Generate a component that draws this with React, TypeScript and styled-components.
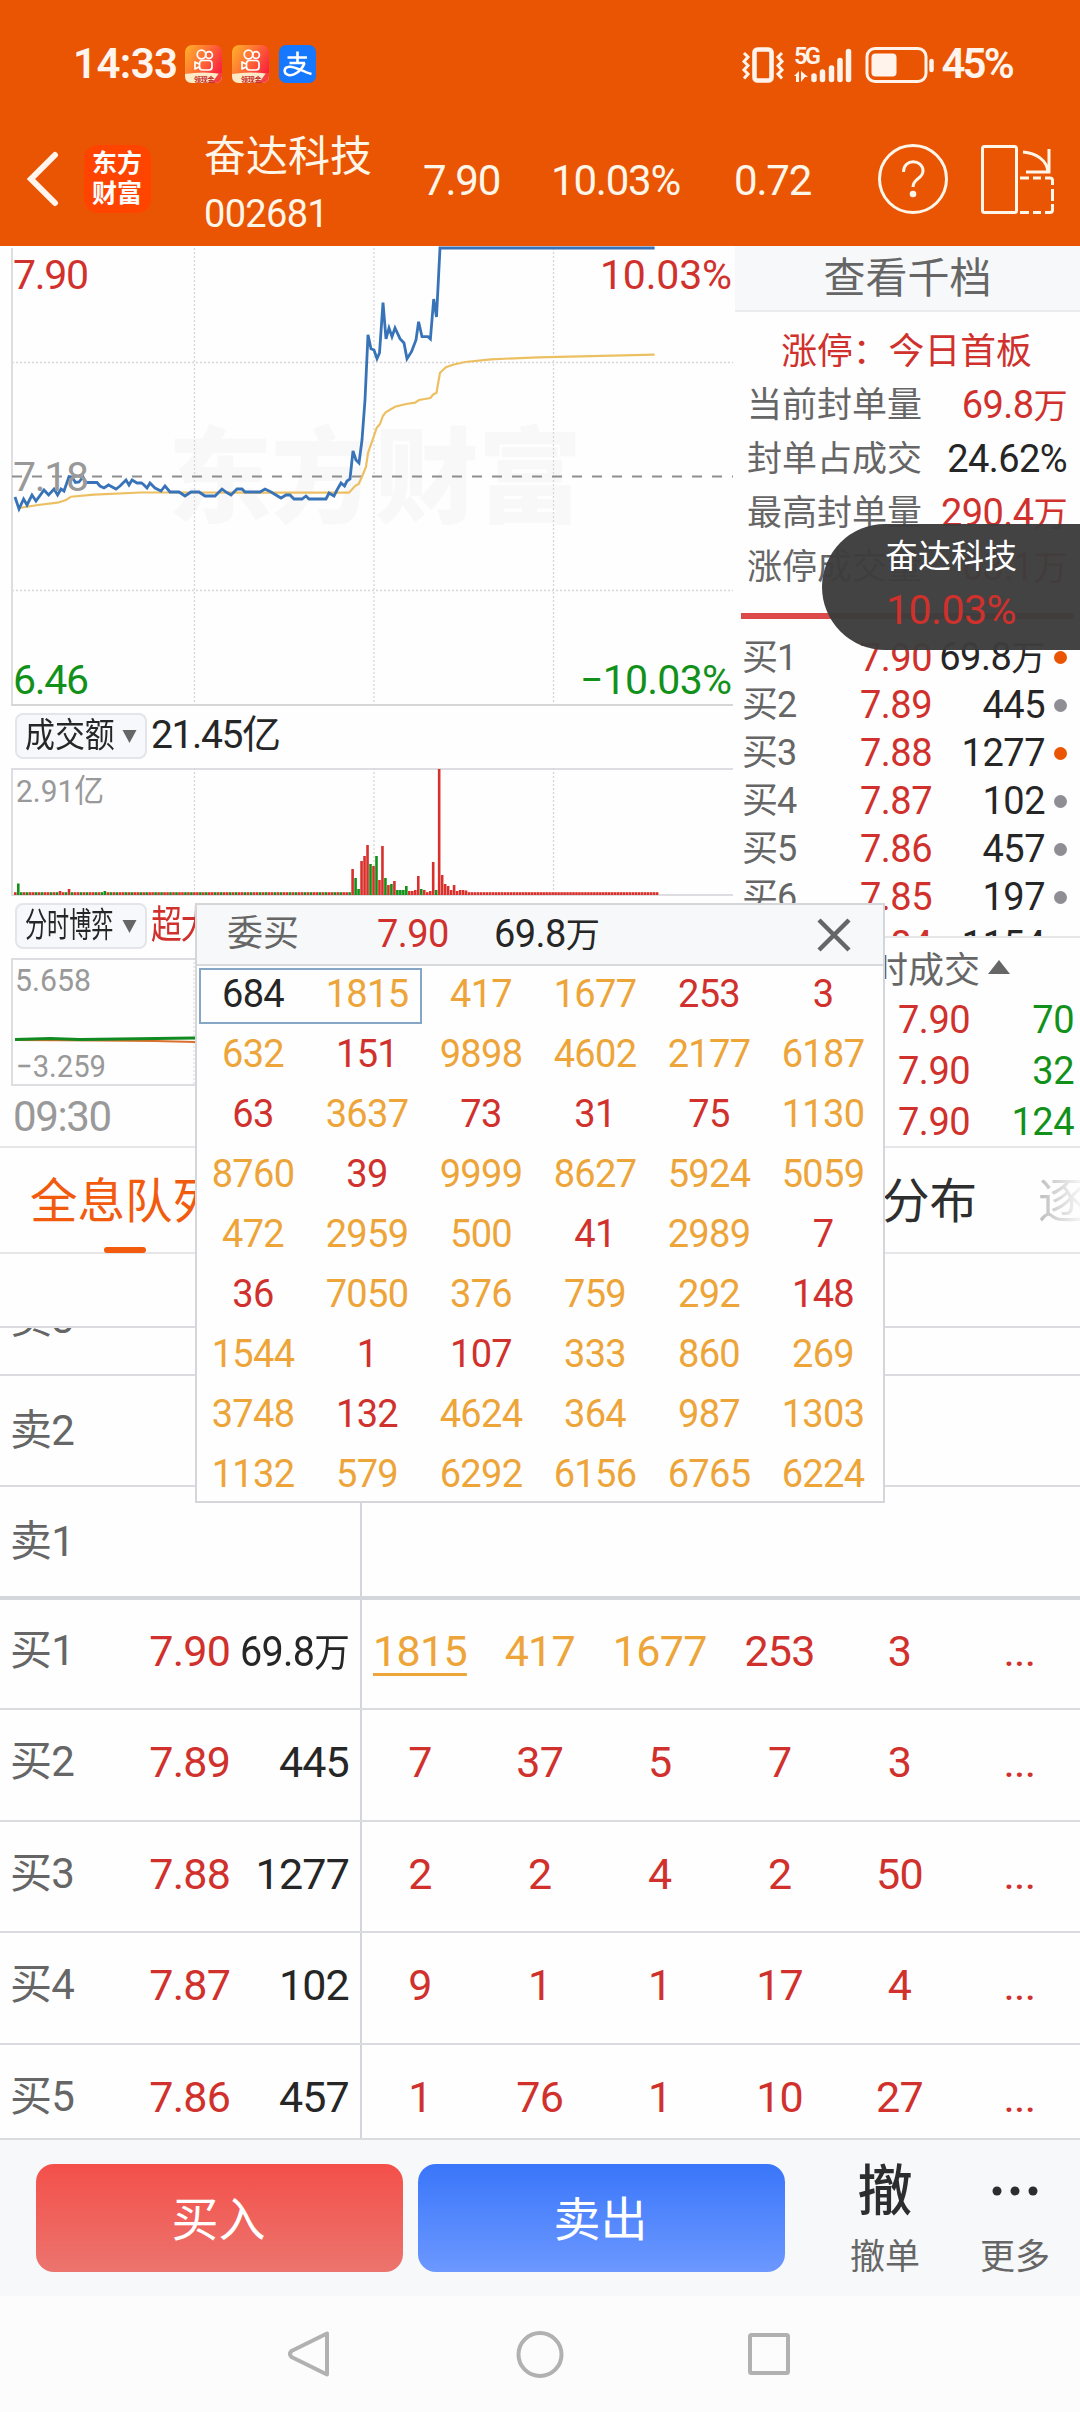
import { FC } from "react";
import styled, { createGlobalStyle, css } from "styled-components";

const RED = "#d0312d";
const GREEN = "#12911a";
const GOLD = "#eda53a";
const ORANGE = "#e95502";
const GREY = "#666666";
const DARK = "#262626";

type Level = { label: string; price: string; volume: string; hot?: boolean };
type QueueRow = Level & { orders: string[]; underlined?: boolean };

const limitInfo = [
  { label: "当前封单量", value: "69.8万", color: RED },
  { label: "封单占成交", value: "24.62%", color: DARK },
  { label: "最高封单量", value: "290.4万", color: RED },
  { label: "涨停成交量", value: "63.1万", color: RED },
];

const levels: Level[] = [
  { label: "买1", price: "7.90", volume: "69.8万", hot: true },
  { label: "买2", price: "7.89", volume: "445" },
  { label: "买3", price: "7.88", volume: "1277", hot: true },
  { label: "买4", price: "7.87", volume: "102" },
  { label: "买5", price: "7.86", volume: "457" },
  { label: "买6", price: "7.85", volume: "197" },
  { label: "买7", price: "7.84", volume: "1154", hot: true },
];

const trades = [
  { price: "7.90", volume: "70" },
  { price: "7.90", volume: "32" },
  { price: "7.90", volume: "124" },
];

const queue: QueueRow[] = [
  {
    label: "买1",
    price: "7.90",
    volume: "69.8万",
    orders: ["1815", "417", "1677", "253", "3", "..."],
    underlined: true,
  },
  { label: "买2", price: "7.89", volume: "445", orders: ["7", "37", "5", "7", "3", "..."] },
  { label: "买3", price: "7.88", volume: "1277", orders: ["2", "2", "4", "2", "50", "..."] },
  { label: "买4", price: "7.87", volume: "102", orders: ["9", "1", "1", "17", "4", "..."] },
  { label: "买5", price: "7.86", volume: "457", orders: ["1", "76", "1", "10", "27", "..."] },
];

const popupOrders = [
  684, 1815, 417, 1677, 253, 3, 632, 151, 9898, 4602, 2177, 6187, 63, 3637, 73, 31, 75, 1130, 8760,
  39, 9999, 8627, 5924, 5059, 472, 2959, 500, 41, 2989, 7, 36, 7050, 376, 759, 292, 148, 1544, 1,
  107, 333, 860, 269, 3748, 132, 4624, 364, 987, 1303, 1132, 579, 6292, 6156, 6765, 6224,
];

const orderColor = (value: number) => (value > 253 ? GOLD : RED);

const priceLine =
  "15,251 19,263 23.6,253 27,259 32,249 36,255 44,244 48.6,249 54,243 57.6,249 61,243 64,245 69,230.5 72,231 75.5,236.5 79,236 83,231 86,236.5 97,236.5 100,240 104,242 108.5,239 116,243 120,240 126,234 129,239 132,234 137,237 141.5,237 144,239 147,242 150,237 155,242 161,245 165,240 170,246 179,246 185,250 191,246 199,246 205,250 215,250 222,243 226,246 231,249 237,243 242,243 245,246 252,246 260,246 265,243 271,246 281,252 286,249 290,249 294,253 302,253 306,250 309,253 326,253 329,247 334,250 337,244 341,237 344.5,240 347,235 350,233 353,205 356,214 359,217 362,194 365,154 368,88.7 371,102.7 374,104 377,112.7 379.5,107 383,56.7 386,93 389,82 392,90.7 395,82 400,92.7 404,97 407,112.7 411.5,105.7 416,94 418.6,75.7 422,90.7 428,90.7 430.4,93 433.7,53 436.5,71 440,2 654.6,2";

const averageLine =
  "19,262 38,259 57.6,256.7 66,254 71,250.7 94,248.7 141,246.5 189,246.5 349,246.7 355,240 358.6,238 362,230.7 366,220.7 368,207 372,195.7 376.6,182 380,178 383,169.7 386,166 395,160.7 406,158 415,156.7 419,154 430.4,152 433,148.7 436.5,146.7 440,126.7 446,121.3 453,118.7 465,116 491,113.3 538,111.3 654.6,108.7";

// [minute index, height, rising]
const tallBars: [number, number, boolean][] = [
  [1, 11.5, false],
  [15, 4, true],
  [18, 6, true],
  [30, 4, false],
  [113, 26, true],
  [114, 17, false],
  [115, 6, false],
  [116, 34, true],
  [117, 39, true],
  [118, 50, true],
  [119, 31, false],
  [120, 29, true],
  [121, 39, false],
  [122, 15, true],
  [123, 49, true],
  [124, 17, false],
  [125, 10, true],
  [126, 11, false],
  [127, 14, true],
  [128, 5, false],
  [129, 5, false],
  [130, 5, false],
  [131, 9, false],
  [132, 4, true],
  [133, 4, true],
  [134, 5, true],
  [135, 19, true],
  [136, 6, false],
  [137, 5, true],
  [139, 4, true],
  [140, 33, true],
  [141, 5, false],
  [142, 126, true],
  [143, 20, true],
  [144, 11, true],
  [145, 9, true],
  [146, 5, true],
  [147, 10, true],
  [148, 4, true],
  [149, 5, true],
  [150, 5, true],
  [151, 4.5, true],
];

const bars = Array.from({ length: 216 }, (_, i) => {
  const tall = tallBars.find(([minute]) => minute === i);
  if (tall) return { height: tall[1], up: tall[2] };
  return { height: 2.8, up: i > 141 || (i * 7) % 5 < 3 };
});

const GlobalStyle = createGlobalStyle`
  * {
    box-sizing: border-box;
  }
  body {
    margin: 0;
    background: #fefefe;
    font-family: Roboto, "Noto Sans CJK SC", sans-serif;
  }
  button {
    border: 0;
    padding: 0;
    background: none;
    font: inherit;
    color: inherit;
  }
  svg {
    display: block;
    flex: none;
  }
`;

const Screen = styled.div`
  position: relative;
  width: 1080px;
  height: 2412px;
  overflow: hidden;
  background: #fefefe;
  white-space: nowrap;
`;

const StatusBar = styled.div`
  display: flex;
  align-items: center;
  height: 127px;
  padding: 0 68px 0 73px;
  background: ${ORANGE};
  color: #fff5ee;
  font-size: 42px;
  font-weight: 600;
  letter-spacing: -0.6px;
`;

const AppIcons = styled.div`
  display: flex;
  gap: 10px;
  margin-left: 8px;
`;

const StatusRight = styled.div`
  display: flex;
  align-items: center;
  gap: 4px;
  margin-left: auto;
  letter-spacing: -2.8px;
`;

const Header = styled.header`
  display: flex;
  align-items: center;
  height: 119px;
  padding: 0 25px 16px 26px;
  background: ${ORANGE};
  color: #fff6ea;
  font-size: 42px;
`;

const Brand = styled.div`
  display: flex;
  flex-direction: column;
  align-items: center;
  justify-content: center;
  width: 67px;
  height: 68px;
  margin-left: 25px;
  padding-right: 1px;
  border-radius: 14px;
  background: #ff4400;
  color: #fff;
  font-size: 25px;
  font-weight: 700;
  line-height: 30px;
`;

const StockName = styled.div`
  display: flex;
  flex-direction: column;
  width: 219px;
  margin-left: 53px;
  padding-top: 13px;
  line-height: 58px;

  small {
    font-size: 38px;
    line-height: 57px;
    letter-spacing: -0.7px;
  }
`;

const HeaderStat = styled.span<{ $width: number }>`
  width: ${({ $width }) => $width}px;
  padding-top: 3px;
  letter-spacing: -1.2px;
`;

const Spacer = styled.div`
  flex: 1;
`;

const Overview = styled.div`
  display: flex;
  height: 902px;
  border-bottom: 2px solid #e6e6e8;
`;

const Charts = styled.div`
  display: flex;
  flex-direction: column;
  width: 735px;
`;

const IndicatorBar = styled.div<{ $color?: string }>`
  display: flex;
  align-items: center;
  gap: 4px;
  height: 46px;
  margin: 7px 0 9px 15px;
  color: ${({ $color }) => $color ?? DARK};
  font-size: 39px;
  line-height: 42px;
  letter-spacing: -1.4px;
`;

const IndicatorSelect = styled.button`
  display: flex;
  align-items: center;
  justify-content: space-between;
  width: 132px;
  height: 46px;
  padding: 0 8px 0 8px;
  border: 2px solid #e3e5ea;
  border-radius: 8px;
  background: #f6f8fb;
  color: ${DARK};
  font-size: 34px;
  line-height: 40px;
  letter-spacing: 0;
`;

const Squeezed = styled.span<{ $width: number; $ratio: number }>`
  width: ${({ $width }) => $width}px;
  margin-top: -2px;

  span {
    display: inline-block;
    transform: scaleX(${({ $ratio }) => $ratio});
    transform-origin: left center;
  }
`;

const TimeAxis = styled.div`
  padding-left: 13px;
  color: #999;
  font-size: 42px;
  line-height: 61px;
  letter-spacing: -1.4px;
`;

const Side = styled.aside`
  display: flex;
  flex-direction: column;
  width: 345px;

  > * {
    flex: none;
  }
`;

const DepthLink = styled.button`
  height: 66px;
  border-bottom: 2px solid #ececef;
  background: #f7f8fa;
  color: ${GREY};
  font-size: 42px;
  line-height: 63px;
`;

const LimitTitle = styled.div`
  margin-top: 14px;
  padding-right: 2px;
  color: ${RED};
  font-size: 35.8px;
  line-height: 52px;
  text-align: center;
`;

const LimitRow = styled.div`
  display: flex;
  justify-content: space-between;
  height: 54px;
  padding: 0 13px 0 12px;
  color: ${GREY};
  font-size: 35px;
  line-height: 55px;
`;

const Figure = styled.span<{ $color: string }>`
  color: ${({ $color }) => $color};
  font-size: 38px;
  letter-spacing: -0.6px;
`;

const Unit = styled.small`
  font-size: 0.9em;
`;

const PressureBar = styled.div`
  height: 6px;
  margin: 19px 6px 14px;
  background: #dd4a4a;
`;

const LevelList = styled.div`
  height: 305px;
  overflow: hidden;
  border-bottom: 2px solid #e6e6e8;
`;

const LevelRow = styled.div`
  display: grid;
  grid-template-columns: 70px 120px 113px auto;
  align-items: center;
  height: 48px;
  padding-left: 7px;
  color: ${DARK};
  font-size: 38px;
  line-height: 48px;
  text-align: right;
  letter-spacing: -0.5px;

  span:first-child {
    color: ${GREY};
    font-size: 36px;
    text-align: left;
    letter-spacing: -1px;
  }
  span:nth-child(2) {
    color: ${RED};
  }
`;

const Dot = styled.i<{ $hot?: boolean }>`
  width: 13px;
  height: 13px;
  margin-left: 9px;
  border-radius: 50%;
  background: ${({ $hot }) => ($hot ? ORANGE : "#8e8e94")};
`;

const TradesTitle = styled.div`
  display: flex;
  align-items: center;
  gap: 8px;
  height: 57px;
  padding-left: 101px;
  color: ${GREY};
  font-size: 36px;
`;

const TradeRow = styled.div`
  display: flex;
  justify-content: space-between;
  padding: 0 6px 0 163px;
  color: ${RED};
  font-size: 38px;
  line-height: 51px;
  letter-spacing: -0.5px;

  span:last-child {
    color: ${GREEN};
  }
`;

const Tabs = styled.nav`
  display: flex;
  height: 106px;
  padding-left: 30px;
  border-bottom: 2px solid #e6e6e8;
`;

const Tab = styled.button<{ $active?: boolean; $fading?: boolean }>`
  display: flex;
  flex-direction: column;
  align-items: center;
  height: 105px;
  margin-left: auto;
  color: #2e2e2e;
  font-size: 47.5px;
  line-height: 109px;

  ${({ $active }) =>
    $active &&
    css`
      margin-left: 0;
      color: #f25a0e;

      &::after {
        content: "";
        width: 42px;
        height: 6px;
        margin-top: -10px;
        border-radius: 3px;
        background: #f25a0e;
      }
    `}

  ${({ $fading }) =>
    $fading &&
    css`
      width: 42px;
      margin-left: 61px;
      overflow: hidden;
      align-items: flex-start;
      color: transparent;
      background: linear-gradient(90deg, #bdbdbd, #f4f4f4);
      background-clip: text;
    `}
`;

const QueueHead = styled.div`
  height: 74px;
  border-bottom: 2px solid #dadce0;
`;

const QueueLine = styled.div`
  display: flex;
  flex: none;
  height: 111.4px;
  border-bottom: 2px solid #d9dbdf;
  font-size: 43px;
  line-height: 104px;

  &:last-child {
    border-bottom: 0;
  }
`;

const QueueList = styled.div`
  display: flex;
  flex-direction: column;
  justify-content: flex-end;
  height: 272px;
  overflow: hidden;
  border-bottom: 4px solid #d3d7db;

  ${QueueLine}:last-child {
    height: 109px;
  }
`;

const BidList = styled.div`
  height: 539px;
  margin-top: -1px;
  padding-bottom: 1px;
  overflow: hidden;
`;

const QueueLevel = styled.div`
  display: grid;
  grid-template-columns: 101px 119px 119px;
  width: 362px;
  padding-left: 10px;
  border-right: 2px solid #d3d5da;
  color: ${DARK};
  text-align: right;
  letter-spacing: -0.8px;

  span:first-child {
    color: ${GREY};
    font-size: 42px;
    text-align: left;
  }
  span:nth-child(2) {
    color: ${RED};
  }
`;

const SellLevel = styled(QueueLevel)`
  line-height: 109px;
`;

const QueueVolume = styled.span<{ $tight: boolean }>`
  transform: scaleX(${({ $tight }) => ($tight ? 0.92 : 1)});
  transform-origin: right center;
`;

const QueueOrders = styled.div`
  display: grid;
  grid-template-columns: repeat(6, 119.9px);
  margin-left: -2px;
  text-align: center;
`;

const Order = styled.span<{ $color: string; $underlined?: boolean }>`
  color: ${({ $color }) => $color};
  letter-spacing: -0.7px;

  ${({ $underlined }) =>
    $underlined &&
    css`
      text-decoration: underline;
      text-decoration-thickness: 2.5px;
      text-underline-offset: 7px;
    `}
`;

const ActionBar = styled.footer`
  display: flex;
  align-items: flex-start;
  height: 158px;
  padding: 24px 0 0 36px;
  border-top: 2px solid #d9dbdf;
  background: #f6f8fa;
`;

const TradeButton = styled.button<{ $from: string; $to: string }>`
  width: 367px;
  height: 108px;
  margin-right: 15px;
  padding: 0 2px 5px 0;
  border-radius: 18px;
  background: linear-gradient(${({ $from, $to }) => `${$from}, ${$to}`});
  color: #fff;
  font-size: 47px;
`;

const ActionItem = styled.button<{ $width: number }>`
  display: flex;
  flex-direction: column;
  align-items: center;
  width: ${({ $width }) => $width}px;
  color: ${GREY};
  font-size: 35px;
  line-height: 50px;

  b {
    height: 69px;
    color: #2d2d2d;
    font-size: 55px;
    font-weight: 500;
    line-height: 54px;
  }
`;

const SystemNav = styled.div`
  display: flex;
  justify-content: space-between;
  height: 116px;
  padding: 34px 288px 0 286px;
  background: #fcfcfc;
`;

const FloatingQuote = styled.div`
  position: absolute;
  top: 524px;
  right: 0;
  display: flex;
  flex-direction: column;
  align-items: center;
  width: 258px;
  height: 126px;
  padding: 6px 0 0 0;
  border-radius: 63px 0 0 63px;
  background: rgba(61, 61, 61, 0.97);
  color: #fff;
  font-size: 33px;
  line-height: 54px;

  span:last-child {
    color: ${RED};
    font-size: 41px;
    line-height: 52px;
    letter-spacing: -0.5px;
  }
`;

const Popup = styled.section`
  position: absolute;
  top: 903px;
  left: 195px;
  width: 690px;
  height: 600px;
  border: 2px solid #d5d6da;
  background: #fefefe;
`;

const PopupHeader = styled.div`
  display: flex;
  align-items: center;
  height: 61px;
  padding: 0 32px 0 30px;
  border-bottom: 2px solid #d9dade;
  background: #f7f8fa;
  color: ${GREY};
  font-size: 36px;
  line-height: 57px;

  svg {
    margin-left: auto;
  }
`;

const PopupPrice = styled(Figure)`
  width: 117px;
  margin-left: 78px;
`;

const PopupGrid = styled.div`
  display: grid;
  grid-template-columns: repeat(6, 114px);
  grid-auto-rows: 60px;
  margin-left: -1px;
  font-size: 38px;
  line-height: 57px;
  text-align: center;
`;

const Selection = styled.div`
  position: absolute;
  top: 63px;
  left: 2px;
  width: 223px;
  height: 56px;
  border: 2px solid #86a6c6;
`;

// the unit is set a little smaller than the digits before it
const Amount: FC<{ value: string }> = ({ value }) =>
  value.endsWith("万") ? (
    <>
      {value.slice(0, -1)}
      <Unit>万</Unit>
    </>
  ) : (
    value
  );

const KwaiIcon: FC<{ id: string }> = ({ id }) => (
  <svg width="37" height="38" viewBox="0 0 37 38">
    <defs>
      <linearGradient id={id} x1="0" y1="0" x2="1" y2="0.6">
        <stop offset="0" stopColor="#ffb42a" />
        <stop offset="0.55" stopColor="#ff6a35" />
        <stop offset="1" stopColor="#fb2440" />
      </linearGradient>
    </defs>
    <rect width="37" height="38" rx="7" fill={`url(#${id})`} />
    <g fill="none" stroke="#fff" strokeWidth="1.7">
      <circle cx="16.5" cy="9.5" r="4.3" />
      <circle cx="24" cy="10" r="3.4" />
      <rect x="14.5" y="15.5" width="12.5" height="9.5" rx="3" />
      <path d="M14 19l-4-2v7l4-2" strokeLinejoin="round" />
    </g>
    <path d="M0 29Q18 26 37 29V31Q37 38 30 38H7Q0 38 0 31Z" fill="#fdebc8" />
    <path d="M34 28l-7 10h3q7 0 7-7v-3z" fill="#f5413f" />
    <text x="9" y="36.5" fontSize="7" fontWeight="700" fill="#c2271d" textLength="20">
      领现金
    </text>
  </svg>
);

const AlipayIcon: FC = () => (
  <svg width="37" height="38" viewBox="0 0 37 38">
    <rect width="37" height="38" rx="7" fill="#1677ff" />
    <g fill="none" stroke="#fff" strokeWidth="2.6">
      <path d="M8.5 12.5H28M18.5 6.5V18M10.5 18H26" />
      <path d="M25.5 18C22 27 14 31 9.5 30C4 28.5 4.5 22 10.5 21.7C17 21.5 24 27 32.5 29" />
    </g>
  </svg>
);

const SignalIcons: FC = () => (
  <svg width="196" height="40" viewBox="0 0 196 40">
    <g fill="none" stroke="#fff3ec">
      <rect x="13.5" y="5.5" width="17" height="31" rx="3" strokeWidth="4.6" />
      <path
        d="M3 9l4 4-4 4.5 4 4-4 4.5 4 4-4 4.5M41 9l-4 4 4 4.5-4 4 4 4.5-4 4 4 4.5"
        strokeWidth="3"
      />
    </g>
    <text x="53" y="20" fontSize="23" fontWeight="600" fill="#fff3ec" textLength="24" lengthAdjust="spacingAndGlyphs">
      5G
    </text>
    <path d="M53 32l5-5v11h-3v-6zM60 27l7 6h-3l-4 5z" fill="#fff3ec" />
    <g stroke="#fff3ec" strokeWidth="5.5" strokeLinecap="round">
      <path d="M73 32v3.500M81.5 28v7.500M90.5 24v11.500M99 16.500v19M107.5 7.500v28" />
    </g>
    <rect x="126" y="4.5" width="59" height="33" rx="8" fill="none" stroke="#fff3ec" strokeWidth="3" />
    <rect x="130.5" y="9.5" width="25" height="23" rx="4" fill="#fff3ec" />
    <path d="M190.5 17v9" stroke="#fff3ec" strokeWidth="4.5" strokeLinecap="round" />
  </svg>
);

const RotateIcon: FC = () => (
  <svg width="75" height="70" viewBox="0 0 75 70" fill="none" stroke="#fff6ea" strokeWidth="3">
    <rect x="2.5" y="2.5" width="34" height="66" rx="2" />
    <path d="M43 8C56 9 67 16 68 28M69 5V28H46" />
    <path d="M40 34h9M53 34h8M65 34h5q2.5 0 2.5 2.5V41M72.5 45v12M72.5 60v6q0 2.5-2.5 2.5h-5M61 68.5h-8M49 68.5h-9" />
  </svg>
);

const gridColumns = [194.5, 374, 553.5];

const PriceChart: FC = () => (
  <svg width="735" height="460" viewBox="0 0 735 460" fontSize="41">
    <text x="168" y="269" fontSize="104" fontWeight="900" fill="#f8f8f8" textLength="414">
      东方财富
    </text>
    <g stroke="#d6d6da" strokeWidth="1.3" strokeDasharray="2 2">
      {gridColumns.map((x) => (
        <path key={x} d={`M${x} 2V458`} />
      ))}
      <path d="M12 116.5H733M12 344.5H733" />
    </g>
    <path d="M12 2V459" stroke="#dedee2" strokeWidth="2" />
    <path d="M11 459H733" stroke="#d6d6d9" strokeWidth="2" />
    <path d="M12 230.5H733" stroke="#8e8e8e" strokeWidth="1.8" strokeDasharray="10 10" />
    <polyline points={averageLine} fill="none" stroke="#ecc062" strokeWidth="2.2" />
    <polyline points={priceLine} fill="none" stroke="#3873b8" strokeWidth="2.8" />
    <text x="13" y="43" fill={RED} textLength="76">
      7.90
    </text>
    <text x="13" y="245" fill="#999" textLength="76">
      7.18
    </text>
    <text x="13" y="448" fill={GREEN} textLength="76">
      6.46
    </text>
    <text x="600" y="43" fill={RED} textLength="132">
      10.03%
    </text>
    <text x="580" y="448" fill={GREEN} textLength="152">
      −10.03%
    </text>
  </svg>
);

const VolumeChart: FC = () => (
  <svg width="735" height="128" viewBox="0 0 735 128">
    <path d="M12 1V127M11 1H733M11 127H733" stroke="#dedee2" strokeWidth="2" />
    {gridColumns.map((x) => (
      <path key={x} d={`M${x} 0V126`} stroke="#d6d6da" strokeWidth="1.3" strokeDasharray="2 2" />
    ))}
    {bars.map(({ height, up }, i) => (
      <rect
        key={i}
        x={14 + i * 2.985}
        y={127 - height}
        width="2.6"
        height={height}
        fill={up ? "#d9302c" : "#129017"}
      />
    ))}
    <text x="16" y="34" fontSize="32" fill="#999" textLength="88" lengthAdjust="spacingAndGlyphs">
      2.91亿
    </text>
  </svg>
);

const GameChart: FC = () => (
  <svg width="735" height="128" viewBox="0 0 735 128" fontSize="31" fill="#999">
    <path d="M12 1V127M11 1H733M11 127H733" stroke="#dedee2" strokeWidth="2" />
    <path d="M194 0V126" stroke="#d6d6da" strokeDasharray="2 2" />
    <path d="M15 82L100 82.5L155 83L195 84" stroke="#d9702c" strokeWidth="2" fill="none" />
    <path d="M15 81.5L50 80.5L80 81.5L195 80" stroke="#128a22" strokeWidth="3" fill="none" />
    <text x="15" y="33" textLength="76" lengthAdjust="spacingAndGlyphs">
      5.658
    </text>
    <text x="16" y="119" textLength="90" lengthAdjust="spacingAndGlyphs">
      −3.259
    </text>
  </svg>
);

const DownArrow: FC = () => (
  <svg width="15" height="13" viewBox="0 0 15 13">
    <path d="M0.5 0h14l-7 13z" fill={GREY} />
  </svg>
);

const App: FC = () => (
  <Screen>
    <GlobalStyle />
    <StatusBar>
      14:33
      <AppIcons>
        <KwaiIcon id="kwai-a" />
        <KwaiIcon id="kwai-b" />
        <AlipayIcon />
      </AppIcons>
      <StatusRight>
        <SignalIcons />
        <span>45%</span>
      </StatusRight>
    </StatusBar>

    <Header>
      <svg width="33" height="56" viewBox="0 0 33 56">
        <path d="M29 4L5 28L29 52" fill="none" stroke="#fff6f0" strokeWidth="6" strokeLinecap="round" />
      </svg>
      <Brand>
        <span>东方</span>
        <span>财富</span>
      </Brand>
      <StockName>
        奋达科技
        <small>002681</small>
      </StockName>
      <HeaderStat $width={128}>7.90</HeaderStat>
      <HeaderStat $width={183}>10.03%</HeaderStat>
      <HeaderStat $width={144}>0.72</HeaderStat>
      <svg width="70" height="70" viewBox="0 0 70 70" fill="none" stroke="#fff6ea" strokeWidth="3">
        <circle cx="35" cy="35" r="33.5" />
        <path d="M25.5 28C25.5 14 45 15 45 27C45 35 35 34 35 43" />
        <circle cx="35" cy="50" r="1.8" fill="#fff6ea" />
      </svg>
      <Spacer />
      <RotateIcon />
    </Header>

    <Overview>
      <Charts>
        <PriceChart />
        <IndicatorBar>
          <IndicatorSelect>
            <Squeezed $width={90} $ratio={0.88}>
              <span>成交额</span>
            </Squeezed>
            <DownArrow />
          </IndicatorSelect>
          <Squeezed $width={140} $ratio={1}>
            <span>21.45亿</span>
          </Squeezed>
        </IndicatorBar>
        <VolumeChart />
        <IndicatorBar $color={RED}>
          <IndicatorSelect>
            <Squeezed $width={90} $ratio={0.65}>
              <span>分时博弈</span>
            </Squeezed>
            <DownArrow />
          </IndicatorSelect>
          <Squeezed $width={140} $ratio={0.79}>
            <span>超大</span>
          </Squeezed>
        </IndicatorBar>
        <GameChart />
        <TimeAxis>09:30</TimeAxis>
      </Charts>

      <Side>
        <DepthLink>查看千档</DepthLink>
        <LimitTitle>涨停：今日首板</LimitTitle>
        {limitInfo.map(({ label, value, color }) => (
          <LimitRow key={label}>
            <span>{label}</span>
            <Figure $color={color}>
              <Amount value={value} />
            </Figure>
          </LimitRow>
        ))}
        <PressureBar />
        <LevelList>
          {levels.map(({ label, price, volume, hot }) => (
            <LevelRow key={label}>
              <span>{label}</span>
              <span>{price}</span>
              <span>
                <Amount value={volume} />
              </span>
              <Dot $hot={hot} />
            </LevelRow>
          ))}
        </LevelList>
        <TradesTitle>
          分时成交
          <svg width="22" height="14" viewBox="0 0 22 14">
            <path d="M11 0L22 14H0z" fill={GREY} />
          </svg>
        </TradesTitle>
        {trades.map(({ price, volume }) => (
          <TradeRow key={volume}>
            <span>{price}</span>
            <span>{volume}</span>
          </TradeRow>
        ))}
      </Side>
    </Overview>

    <Tabs>
      <Tab $active>全息队列</Tab>
      <Tab>分布</Tab>
      <Tab $fading>逐</Tab>
    </Tabs>

    <QueueHead />
    <QueueList>
      {["卖3", "卖2", "卖1"].map((label) => (
        <QueueLine key={label}>
          <SellLevel>
            <span>{label}</span>
          </SellLevel>
        </QueueLine>
      ))}
    </QueueList>
    <BidList>
      {queue.map(({ label, price, volume, orders, underlined }) => (
        <QueueLine key={label}>
          <QueueLevel>
            <span>{label}</span>
            <span>{price}</span>
            <QueueVolume $tight={volume.endsWith("万")}>
              <Amount value={volume} />
            </QueueVolume>
          </QueueLevel>
          <QueueOrders>
            {orders.map((order, i) => (
              <Order
                key={i}
                $color={order === "..." ? RED : orderColor(Number(order))}
                $underlined={underlined && i === 0}
              >
                {order}
              </Order>
            ))}
          </QueueOrders>
        </QueueLine>
      ))}
    </BidList>

    <ActionBar>
      <TradeButton $from="#f4504a" $to="#ec746e">
        买入
      </TradeButton>
      <TradeButton $from="#3a76fa" $to="#6c98ff">
        卖出
      </TradeButton>
      <ActionItem $width={170}>
        <b>撤</b>
        撤单
      </ActionItem>
      <ActionItem $width={90}>
        <b>
          <svg width="48" height="54" viewBox="0 0 48 54" fill="#2d2d2d">
            <circle cx="6" cy="27" r="4.5" />
            <circle cx="24" cy="27" r="4.5" />
            <circle cx="42" cy="27" r="4.5" />
          </svg>
        </b>
        更多
      </ActionItem>
    </ActionBar>

    <SystemNav>
      <svg width="46" height="50" viewBox="0 0 46 50">
        <path
          d="M41 3.5V44.5L5.5 27Q2.5 24 5.5 21Z"
          fill="none"
          stroke="#b1b1b1"
          strokeWidth="4"
          strokeLinejoin="round"
        />
      </svg>
      <svg width="50" height="50" viewBox="0 0 50 50">
        <circle cx="26" cy="24.5" r="21.5" fill="none" stroke="#b1b1b1" strokeWidth="4" />
      </svg>
      <svg width="46" height="50" viewBox="0 0 46 50">
        <rect x="4" y="5" width="38" height="38" rx="1.5" fill="none" stroke="#b1b1b1" strokeWidth="4" />
      </svg>
    </SystemNav>

    <FloatingQuote>
      <span>奋达科技</span>
      <span>10.03%</span>
    </FloatingQuote>

    <Popup>
      <PopupHeader>
        委买
        <PopupPrice $color={RED}>7.90</PopupPrice>
        <Figure $color={DARK}>
          <Amount value="69.8万" />
        </Figure>
        <svg width="34" height="34" viewBox="0 0 34 34">
          <path d="M2 2L32 32M32 2L2 32" stroke={GREY} strokeWidth="4.5" />
        </svg>
      </PopupHeader>
      <PopupGrid>
        {popupOrders.map((order, i) => (
          <Order key={i} $color={i === 0 ? DARK : orderColor(order)}>
            {order}
          </Order>
        ))}
      </PopupGrid>
      <Selection />
    </Popup>
  </Screen>
);

export default App;
